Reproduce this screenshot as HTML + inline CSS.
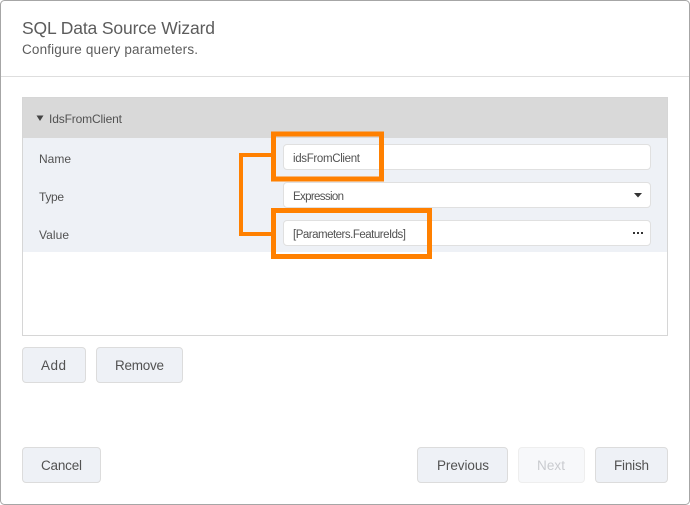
<!DOCTYPE html>
<html>
<head>
<meta charset="utf-8">
<style>
html,body{margin:0;padding:0;background:#fff;width:690px;height:505px;overflow:hidden}
svg{display:block}
text{font-family:"Liberation Sans",sans-serif;fill:#525252}
</style>
</head>
<body>
<svg width="690" height="505" viewBox="0 0 690 505" xmlns="http://www.w3.org/2000/svg">
<rect x="0.5" y="0.5" width="689" height="504" rx="4" fill="#fff" stroke="#a6a6a6"/>
<rect x="1" y="76" width="688" height="1" fill="#dedede"/>

<text x="22" y="34" font-size="17.5" textLength="193" style="fill:#5c5c5c">SQL Data Source Wizard</text>
<text x="22" y="54" font-size="13.5" textLength="176" style="fill:#5c5c5c">Configure query parameters.</text>

<rect x="22.5" y="97.5" width="645" height="238" fill="#fff" stroke="#d6d6d6"/>
<rect x="23" y="98" width="644" height="40" fill="#d9d9d9"/>
<rect x="23" y="138" width="644" height="114" fill="#eef1f6"/>
<path d="M36.500 115.500h7l-3.500 5.500z" fill="#444"/>
<text x="49" y="123" font-size="12" textLength="73">IdsFromClient</text>

<text x="39" y="163" font-size="12" textLength="32">Name</text>
<text x="39" y="201" font-size="12" textLength="25">Type</text>
<text x="39" y="239" font-size="12" textLength="30">Value</text>

<rect x="283.5" y="144.5" width="367" height="25" rx="3.5" fill="#fff" stroke="#e0e0e0"/>
<rect x="283.5" y="182.5" width="367" height="25" rx="3.5" fill="#fff" stroke="#e0e0e0"/>
<rect x="283.5" y="220.5" width="367" height="25" rx="3.5" fill="#fff" stroke="#e0e0e0"/>
<text x="293" y="162" font-size="11.5" textLength="67">idsFromClient</text>
<text x="293" y="200" font-size="11.5" textLength="51">Expression</text>
<text x="293" y="238" font-size="11.5" textLength="113">[Parameters.FeatureIds]</text>
<path d="M634 193h8l-4 4.500z" fill="#333"/>
<rect x="633" y="232" width="2" height="2" fill="#333"/>
<rect x="637" y="232" width="2" height="2" fill="#333"/>
<rect x="641" y="232" width="2" height="2" fill="#333"/>

<path d="M273 155H241V234H273" fill="none" stroke="#ff8000" stroke-width="4"/>
<rect x="273.500" y="134" width="108" height="45" fill="none" stroke="#ff8000" stroke-width="5"/>
<rect x="273.500" y="210.500" width="156" height="46" fill="none" stroke="#ff8000" stroke-width="5"/>

<rect x="22.500" y="347.500" width="63" height="35" rx="3.500" fill="#eef1f6" stroke="#dcdcdc"/>
<rect x="96.500" y="347.500" width="86" height="35" rx="3.500" fill="#eef1f6" stroke="#dcdcdc"/>
<rect x="22.500" y="447.500" width="78" height="35" rx="3.500" fill="#eef1f6" stroke="#dcdcdc"/>
<rect x="417.500" y="447.500" width="90" height="35" rx="3.500" fill="#eef1f6" stroke="#dcdcdc"/>
<rect x="518.500" y="447.500" width="66" height="35" rx="3.500" fill="#f7f8fa" stroke="#eeeeee"/>
<rect x="595.500" y="447.500" width="72" height="35" rx="3.500" fill="#eef1f6" stroke="#dcdcdc"/>

<text x="41" y="370" font-size="13.500" textLength="25">Add</text>
<text x="115" y="370" font-size="13.500" textLength="49">Remove</text>
<text x="41" y="470" font-size="13.500" textLength="41">Cancel</text>
<text x="437" y="470" font-size="13.500" textLength="52">Previous</text>
<text x="537" y="470" font-size="13.500" textLength="28" style="fill:#c9cbcf">Next</text>
<text x="614" y="470" font-size="13.500" textLength="35">Finish</text>
</svg>
</body>
</html>
